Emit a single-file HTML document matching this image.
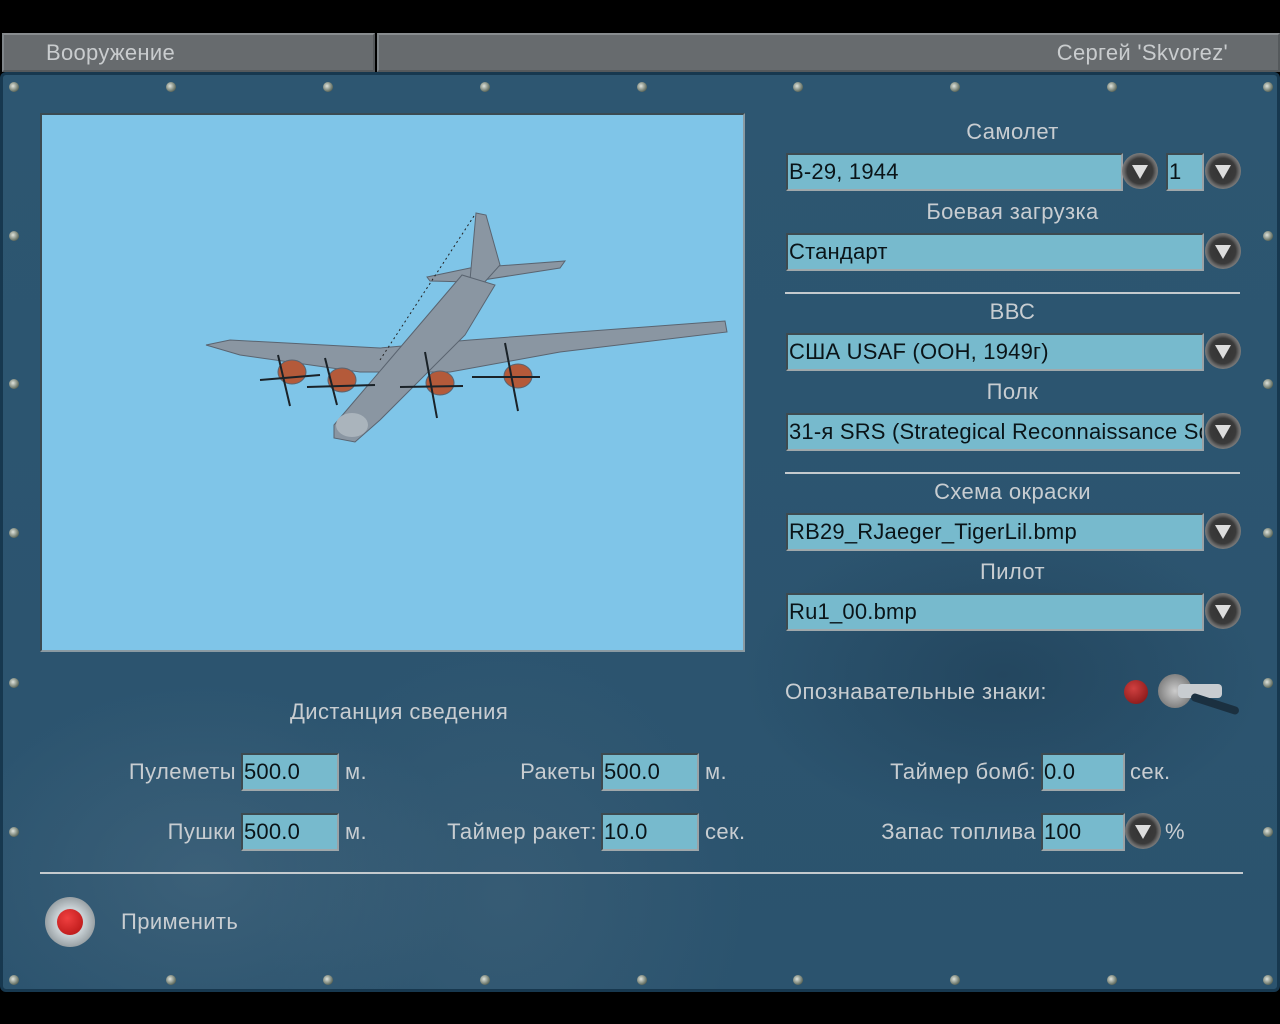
<!DOCTYPE html>
<html><head><meta charset="utf-8"><style>
*{margin:0;padding:0;box-sizing:border-box}
body{width:1280px;height:1024px;background:#000;position:relative;overflow:hidden;font-family:"Liberation Sans",sans-serif;}
.hdr{position:absolute;top:33px;height:39px;background:#676b6e;border:2px solid #55595c;border-top-color:#888c8f;border-left-color:#80868a;}
.hdr span{position:absolute;top:5px;font-size:22px;color:#c9ccce;letter-spacing:0.3px}
.panel{position:absolute;left:0;top:72px;width:1280px;height:920px;background:#2c5470;border:3px solid #17384f;border-radius:6px;
background-image:radial-gradient(ellipse at 200px 800px,rgba(90,120,140,.35),transparent 260px),radial-gradient(ellipse at 500px 820px,rgba(80,110,130,.3),transparent 240px),radial-gradient(ellipse at 1000px 600px,rgba(20,45,65,.35),transparent 260px),linear-gradient(#2d5671,#2b536e);}
.screw{position:absolute;width:10px;height:10px;border-radius:50%;background:radial-gradient(circle at 40% 40%,#e0e4dc,#6f7a6e 60%,#2a3128);}
.t{position:absolute;color:#c8cdd1;font-size:22px;letter-spacing:0.4px;white-space:nowrap}
.c{left:785px;width:455px;text-align:center}
.f{position:absolute;height:38px;background:#77bacd;border:2px solid #3d4a50;border-right-color:#9aa2a6;border-bottom-color:#a0a8ab;color:#0a1418;font-size:22px;padding-left:1px;line-height:33px;letter-spacing:0.2px;white-space:nowrap;overflow:hidden}
.b{position:absolute;width:36px;height:36px;border-radius:50%;background:radial-gradient(circle,#333 0,#3a3a3a 50%,#666 62%,#888 75%,#444 100%);}
.b:after{content:"";position:absolute;left:10px;top:12px;border-left:8px solid transparent;border-right:8px solid transparent;border-top:14px solid #ddd;}
.ln{position:absolute;height:2px;background:#c4cace}
</style></head><body>
<div class="hdr" style="left:2px;width:373px"><span style="left:42px">Вооружение</span></div>
<div class="hdr" style="left:377px;width:903px"><span style="right:50px">Сергей 'Skvorez'</span></div>
<div class="panel"></div>
<div class="screw" style="left:9px;top:82px"></div><div class="screw" style="left:166px;top:82px"></div><div class="screw" style="left:323px;top:82px"></div><div class="screw" style="left:480px;top:82px"></div><div class="screw" style="left:637px;top:82px"></div><div class="screw" style="left:793px;top:82px"></div><div class="screw" style="left:950px;top:82px"></div><div class="screw" style="left:1107px;top:82px"></div><div class="screw" style="left:1263px;top:82px"></div>
<div class="screw" style="left:9px;top:975px"></div><div class="screw" style="left:166px;top:975px"></div><div class="screw" style="left:323px;top:975px"></div><div class="screw" style="left:480px;top:975px"></div><div class="screw" style="left:637px;top:975px"></div><div class="screw" style="left:793px;top:975px"></div><div class="screw" style="left:950px;top:975px"></div><div class="screw" style="left:1107px;top:975px"></div><div class="screw" style="left:1263px;top:975px"></div>
<div class="screw" style="left:9px;top:231px"></div><div class="screw" style="left:9px;top:379px"></div><div class="screw" style="left:9px;top:528px"></div><div class="screw" style="left:9px;top:678px"></div><div class="screw" style="left:9px;top:827px"></div>
<div class="screw" style="left:1263px;top:231px"></div><div class="screw" style="left:1263px;top:379px"></div><div class="screw" style="left:1263px;top:528px"></div><div class="screw" style="left:1263px;top:678px"></div><div class="screw" style="left:1263px;top:827px"></div>
<div style="position:absolute;left:40px;top:113px;width:705px;height:539px;background:#7fc5e8;border:2px solid #3a4a52;border-right-color:#8a9aa2;border-bottom-color:#8a9aa2"></div>
<svg style="position:absolute;left:0;top:0" width="1280" height="1024">
<g fill="#8a96a2" stroke="#5a6470" stroke-width="1">
<polygon points="206,345 230,340 380,348 470,340 725,321 727,332 560,352 450,372 360,372 240,355"/>
<polygon points="427,277 470,268 565,261 560,268 470,282 430,281"/>
<polygon points="476,213 486,215 500,265 482,285 470,280"/>
<polygon points="334,425 462,275 495,285 465,335 380,420 355,442 334,438"/>
<ellipse cx="292" cy="372" rx="14" ry="12" fill="#b45a3a"/><ellipse cx="342" cy="380" rx="14" ry="12" fill="#b45a3a"/><ellipse cx="440" cy="383" rx="14" ry="12" fill="#b45a3a"/><ellipse cx="518" cy="376" rx="14" ry="12" fill="#b45a3a"/>
</g>
<g stroke="#1a2228" stroke-width="2">
<line x1="260" y1="380" x2="320" y2="375"/><line x1="278" y1="355" x2="290" y2="406"/>
<line x1="307" y1="387" x2="375" y2="385"/><line x1="325" y1="358" x2="337" y2="405"/>
<line x1="400" y1="387" x2="463" y2="386"/><line x1="425" y1="352" x2="437" y2="418"/>
<line x1="472" y1="377" x2="540" y2="377"/><line x1="505" y1="343" x2="518" y2="411"/>
</g>
<line x1="474" y1="216" x2="380" y2="360" stroke="#222" stroke-dasharray="2 3"/>
<ellipse cx="352" cy="425" rx="16" ry="12" fill="#aab4bc"/>
</svg>
<div class="t c" style="top:119px">Самолет</div>
<div class="f" style="left:786px;top:153px;width:337px">B-29, 1944</div><div class="b" style="left:1122px;top:153px"></div>
<div class="f" style="left:1166px;top:153px;width:38px">1</div><div class="b" style="left:1205px;top:153px"></div>
<div class="t c" style="top:199px">Боевая загрузка</div>
<div class="f" style="left:786px;top:233px;width:418px">Стандарт</div><div class="b" style="left:1205px;top:233px"></div>
<div class="ln" style="left:785px;top:292px;width:455px"></div>
<div class="t c" style="top:299px">ВВС</div>
<div class="f" style="left:786px;top:333px;width:418px">США USAF (ООН, 1949г)</div><div class="b" style="left:1205px;top:333px"></div>
<div class="t c" style="top:379px">Полк</div>
<div class="f" style="left:786px;top:413px;width:418px">31-я SRS (Strategical Reconnaissance Sq</div><div class="b" style="left:1205px;top:413px"></div>
<div class="ln" style="left:785px;top:472px;width:455px"></div>
<div class="t c" style="top:479px">Схема окраски</div>
<div class="f" style="left:786px;top:513px;width:418px">RB29_RJaeger_TigerLil.bmp</div><div class="b" style="left:1205px;top:513px"></div>
<div class="t c" style="top:559px">Пилот</div>
<div class="f" style="left:786px;top:593px;width:418px">Ru1_00.bmp</div><div class="b" style="left:1205px;top:593px"></div>
<div class="t" style="left:785px;top:679px">Опознавательные знаки:</div>
<div style="position:absolute;left:1124px;top:680px;width:24px;height:24px;border-radius:50%;background:radial-gradient(circle at 40% 35%,#d04040,#7a1010)"></div>
<div style="position:absolute;left:1158px;top:674px;width:34px;height:34px;border-radius:50%;background:radial-gradient(circle,#ccc,#777 80%,#444)"></div>
<div style="position:absolute;left:1178px;top:684px;width:44px;height:14px;background:#c8ccd0;border-radius:4px"></div>
<div style="position:absolute;left:1190px;top:700px;width:50px;height:8px;background:#1b3040;transform:rotate(18deg);border-radius:4px"></div>
<div class="t" style="left:290px;top:699px">Дистанция сведения</div>
<div class="t" style="right:1044px;top:759px">Пулеметы</div><div class="f" style="left:241px;top:753px;width:98px">500.0</div><div class="t" style="left:345px;top:759px">м.</div>
<div class="t" style="right:1044px;top:819px">Пушки</div><div class="f" style="left:241px;top:813px;width:98px">500.0</div><div class="t" style="left:345px;top:819px">м.</div>
<div class="t" style="right:684px;top:759px">Ракеты</div><div class="f" style="left:601px;top:753px;width:98px">500.0</div><div class="t" style="left:705px;top:759px">м.</div>
<div class="t" style="right:683px;top:819px">Таймер ракет:</div><div class="f" style="left:601px;top:813px;width:98px">10.0</div><div class="t" style="left:705px;top:819px">сек.</div>
<div class="t" style="right:244px;top:759px">Таймер бомб:</div><div class="f" style="left:1041px;top:753px;width:84px">0.0</div><div class="t" style="left:1130px;top:759px">сек.</div>
<div class="t" style="right:244px;top:819px">Запас топлива</div><div class="f" style="left:1041px;top:813px;width:84px">100</div><div class="b" style="left:1125px;top:813px"></div><div class="t" style="left:1165px;top:819px">%</div>
<div class="ln" style="left:40px;top:872px;width:1203px"></div>
<div style="position:absolute;left:45px;top:897px;width:50px;height:50px;border-radius:50%;background:radial-gradient(circle,#c8d0d4 40%,#8a9296 80%,#4a5256)"></div>
<div style="position:absolute;left:57px;top:909px;width:26px;height:26px;border-radius:50%;background:radial-gradient(circle at 40% 35%,#f04040,#b01010)"></div>
<div class="t" style="left:121px;top:909px">Применить</div>
</body></html>
